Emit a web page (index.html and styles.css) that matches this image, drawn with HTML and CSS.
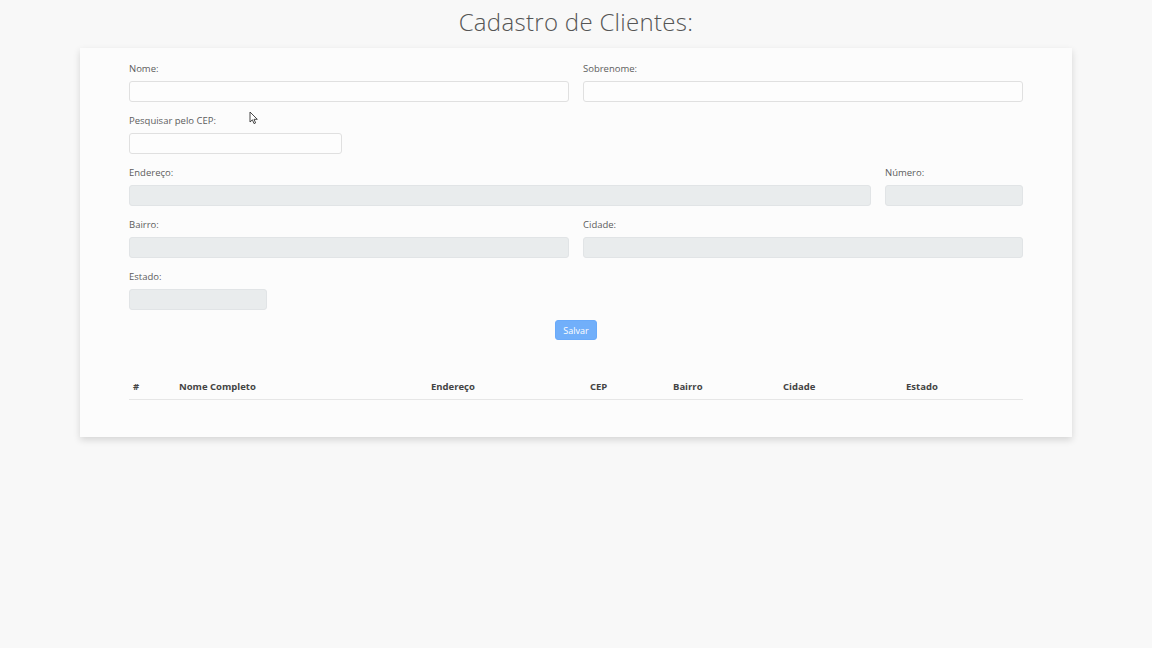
FILE: index.html
```html
<!DOCTYPE html>
<html lang="pt-BR">
<head>
<meta charset="utf-8">
<title>Cadastro de Clientes</title>
<link rel="stylesheet" href="styles.css">
</head>
<body>
<h1 class="title">Cadastro de Clientes:</h1>
<main class="card">
  <form class="form">
    <div class="row two">
      <div class="field"><label>Nome:</label><input class="input" type="text"></div>
      <div class="field"><label>Sobrenome:</label><input class="input" type="text"></div>
    </div>
    <div class="row">
      <div class="field cep"><label>Pesquisar pelo CEP:</label><input class="input" type="text"></div>
    </div>
    <div class="row addr">
      <div class="field"><label>Endereço:</label><input class="input" type="text" disabled></div>
      <div class="field"><label>Número:</label><input class="input" type="text" disabled></div>
    </div>
    <div class="row two">
      <div class="field"><label>Bairro:</label><input class="input" type="text" disabled></div>
      <div class="field"><label>Cidade:</label><input class="input" type="text" disabled></div>
    </div>
    <div class="row last">
      <div class="field uf"><label>Estado:</label><input class="input" type="text" disabled></div>
    </div>
    <div class="actions"><button class="btn" type="button">Salvar</button></div>
  </form>
  <table class="table">
    <thead>
      <tr>
        <th class="c-id">#</th>
        <th class="c-nome">Nome Completo</th>
        <th class="c-end">Endereço</th>
        <th class="c-cep">CEP</th>
        <th class="c-bairro">Bairro</th>
        <th class="c-cidade">Cidade</th>
        <th class="c-uf">Estado</th>
      </tr>
    </thead>
    <tbody></tbody>
  </table>
</main>
<svg class="cursor" width="10" height="14" viewBox="0 0 10 14"><path d="M1 1 L1 11 L3.4 8.8 L5 12.6 L6.6 11.9 L5 8.3 L8.3 8.3 Z" fill="#fff" stroke="#333" stroke-width="0.9" stroke-linejoin="round"/></svg>
</body>
</html>
```
FILE: styles.css
```css
html, body {
  margin: 0;
  padding: 0;
}
body {
  background: #f8f8f8;
  font-family: "Open Sans", "Liberation Sans", sans-serif;
  color: #555;
  position: relative;
  min-height: 648px;
}
.title {
  margin: 0;
  padding-top: 7px;
  height: 41px;
  box-sizing: border-box;
  text-align: center;
  font-weight: 300;
  font-size: 24px;
  line-height: 30px;
  color: #555;
  letter-spacing: 0.3px;
}
.card {
  width: 992px;
  margin: 7px auto 0;
  box-sizing: border-box;
  padding: 15px 49px 37px 49px;
  background: #fcfcfc;
  box-shadow: 0 3px 7px rgba(0,0,0,0.14);
}
.form {
  display: flex;
  flex-direction: column;
}
.row {
  display: flex;
  gap: 14px;
  margin-bottom: 13px;
}
.row.last { margin-bottom: 0; }
.row.two .field { flex: 1; }
.row.addr .field:first-child { flex: 1; }
.row.addr .field:last-child { width: 138px; }
.field {
  display: flex;
  flex-direction: column;
}
.field.cep { width: 213px; }
.field.uf { width: 138px; }
label {
  font-size: 9.5px;
  line-height: 12px;
  margin-bottom: 6px;
  color: #5c5c5c;
}
.input {
  height: 21px;
  box-sizing: border-box;
  border: 1px solid #e0e0e0;
  border-radius: 3px;
  background: #fdfdfd;
  padding: 0 6px;
  font-family: inherit;
  margin: 0;
}
.input:disabled {
  background: #e9eced;
  border-color: #e1e4e6;
}
.actions {
  display: flex;
  justify-content: center;
  margin-top: 10px;
}
.btn {
  width: 42px;
  height: 20px;
  border: 1px solid #62a6fa;
  background: #6aabfa;
  color: #fff;
  border-radius: 3px;
  font-family: inherit;
  font-size: 9px;
  padding: 0;
  opacity: 0.95;
}
.table {
  margin-top: 35px;
  width: 100%;
  border-collapse: collapse;
  font-size: 9.5px;
}
.table th {
  text-align: left;
  font-weight: 700;
  color: #444;
  padding: 6px 4px;
  line-height: 12px;
  border-bottom: 1px solid #e6e6e6;
}
.c-id { width: 38px; }
.c-nome { width: 244px; }
.c-end { width: 151px; }
.c-cep { width: 75px; }
.c-bairro { width: 102px; }
.c-cidade { width: 115px; }
.cursor {
  position: absolute;
  left: 249px;
  top: 111px;
}
```
